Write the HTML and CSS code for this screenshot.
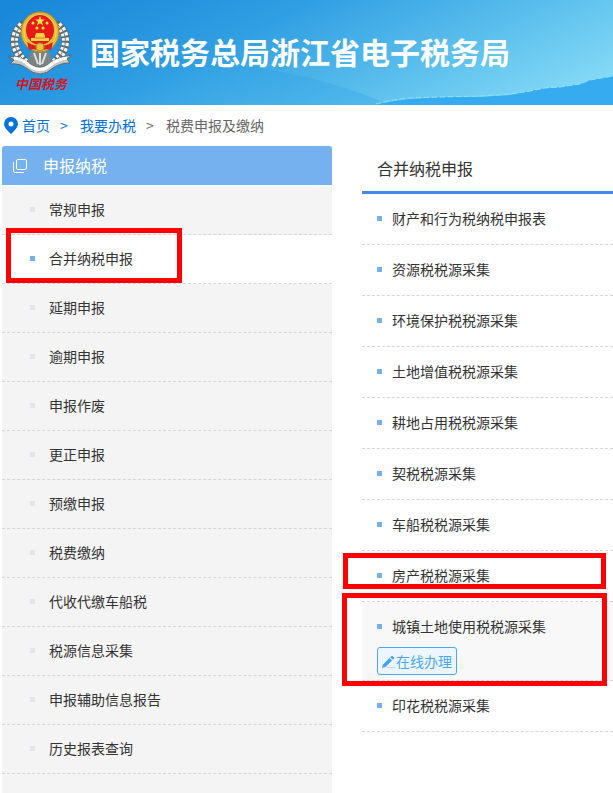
FILE: index.html
```html
<!DOCTYPE html>
<html lang="zh-CN">
<head>
<meta charset="utf-8">
<meta name="viewport" content="width=device-width, initial-scale=1">
<title>国家税务总局浙江省电子税务局</title>
<link rel="stylesheet" href="styles.css">
</head>
<body>
<header class="banner">
  <svg class="banner-art" viewBox="0 0 613 105" preserveAspectRatio="none" aria-hidden="true">
    <defs>
      <linearGradient id="sky" gradientUnits="userSpaceOnUse" x1="90" y1="-60" x2="310" y2="390">
        <stop offset="0" stop-color="#1583d8"/>
        <stop offset=".3" stop-color="#2f9ee2"/>
        <stop offset=".55" stop-color="#62c4ee"/>
        <stop offset=".75" stop-color="#90e0f8"/>
      </linearGradient>
      <linearGradient id="hill" x1="0" y1="0" x2="1" y2="0">
        <stop offset="0" stop-color="#2a9fe5" stop-opacity="0"/>
        <stop offset=".6" stop-color="#2a9fe5" stop-opacity=".3"/>
        <stop offset="1" stop-color="#2a9fe5" stop-opacity=".3"/>
      </linearGradient>
    </defs>
    <rect width="613" height="105" fill="url(#sky)"/>
    <path d="M120 60Q280 56 390 105H120Z" fill="url(#hill)"/>
    <path d="M376 105Q390 101 410 99L440 97 480 97 510 95 530 91 545 88 560 87 580 84 590 80 613 76V105Z" fill="#37abf0"/>
    <path d="M376 104Q390 100 410 98L440 97 480 96 510 94 530 91 545 88 560 87 580 84 590 80 613 76" fill="none" stroke="#8be4f8" stroke-dasharray="6 2"/>
  </svg>
  <svg class="emblem" viewBox="0 0 68 86" role="img" aria-label="中国税务">
    <g fill="none" stroke-linecap="round">
      <path d="M15 15C3 25 5 44 24 56M51 15C63 25 61 44 42 56" stroke="#5b686d" stroke-width="8"/>
      <path d="M15 15C3 25 5 44 24 56M51 15C63 25 61 44 42 56" stroke="#f1f3ef" stroke-width="7" stroke-dasharray="3 2" stroke-linecap="butt"/>
      <path d="M15 15C3 25 5 44 24 56M51 15C63 25 61 44 42 56" stroke="#777d7c" stroke-width="1"/>
    </g>
    <path d="M24 42H42L46 54 33 60 20 54Z" fill="#7d8583"/>
    <path d="M27 43L31 54M39 43L35 54M33 43V55" stroke="#dfe3df" stroke-width="2"/>
    <path d="M1 46Q10 46 17 50Q26 57 33 57Q40 57 48 50Q55 46 65 45L60 49 63 53Q53 53 46 58Q40 64 33 64Q26 64 19 58Q13 53 3 54L7 50Z" fill="#c3c9c6" stroke="#5b686d"/>
    <path d="M7 48Q16 49 23 56Q33 63 42 56Q50 49 60 48" fill="none" stroke="#fff" stroke-width="3"/>
    <ellipse cx="33" cy="22" rx="19" ry="20" fill="#e4b936" stroke="#b98421"/>
    <ellipse cx="33" cy="22" rx="16" ry="17" fill="none" stroke="#f3d66a"/>
    <ellipse cx="33" cy="20" rx="14" ry="15" fill="#e61b16"/>
    <path d="M20 32Q26 36 33 36Q40 36 46 32L44 40Q38 38 33 41Q28 38 22 40Z" fill="#d92318"/>
    <circle cx="33" cy="37" r="4" fill="#edc23f" stroke="#b98421"/>
    <path d="M33 6L34.300 9.500H38L35 11.700 36.200 15.500 33 13.200 29.800 15.500 31 11.700 28 9.500H31.700Z" fill="#ffe34e"/>
    <g fill="#ffe34e"><circle cx="26" cy="13" r="1.500"/><circle cx="40" cy="13" r="1.500"/><circle cx="30" cy="18" r="1.500"/><circle cx="36" cy="18" r="1.500"/></g>
    <path d="M28 26L29 23H37L38 26V28H42V31H24V28H28Z" fill="#f8cf42"/>
    <path d="M28 28H38" stroke="#d98a22"/>
    <text class="emblem-text" x="8" y="79">中国税务</text>
  </svg>
  <h1 class="site-name">国家税务总局浙江省电子税务局</h1>
</header>

<nav class="crumbs" aria-label="当前位置">
  <svg class="pin" viewBox="0 0 14 17" aria-hidden="true"><path fill-rule="evenodd" d="M7 0A7 7 0 0 1 14 7C14 10.500 10.500 13.500 7 17C3.500 13.500 0 10.500 0 7A7 7 0 0 1 7 0ZM7 4.500A2.500 2.500 0 1 0 7 9.500A2.500 2.500 0 1 0 7 4.500Z" fill="#0070dc"/></svg>
  <a href="#">首页</a>
  <span class="sep sep-link">&gt;</span>
  <a href="#">我要办税</a>
  <span class="sep">&gt;</span>
  <span>税费申报及缴纳</span>
</nav>

<div class="columns">
  <aside class="side">
    <h2 class="side-title">
      <svg class="copy" viewBox="0 0 14 14" aria-hidden="true"><rect x="3.500" y=".5" width="10" height="10" rx="1.500"/><path d="M.5 3V12Q.5 13.500 2 13.500H11"/></svg>
      申报纳税
    </h2>
    <ul class="menu">
      <li><a href="#">常规申报</a></li>
      <li class="current"><a href="#">合并纳税申报</a><span class="mark mark-menu"></span></li>
      <li><a href="#">延期申报</a></li>
      <li><a href="#">逾期申报</a></li>
      <li><a href="#">申报作废</a></li>
      <li><a href="#">更正申报</a></li>
      <li><a href="#">预缴申报</a></li>
      <li><a href="#">税费缴纳</a></li>
      <li><a href="#">代收代缴车船税</a></li>
      <li><a href="#">税源信息采集</a></li>
      <li><a href="#">申报辅助信息报告</a></li>
      <li><a href="#">历史报表查询</a></li>
    </ul>
  </aside>
  <main class="content">
    <h2 class="content-title">合并纳税申报</h2>
    <ul class="forms">
      <li><a href="#">财产和行为税纳税申报表</a></li>
      <li><a href="#">资源税税源采集</a></li>
      <li><a href="#">环境保护税税源采集</a></li>
      <li><a href="#">土地增值税税源采集</a></li>
      <li><a href="#">耕地占用税税源采集</a></li>
      <li><a href="#">契税税源采集</a></li>
      <li><a href="#">车船税税源采集</a></li>
      <li><a href="#">房产税税源采集</a><span class="mark mark-house"></span></li>
      <li class="open">
        <a href="#">城镇土地使用税税源采集</a>
        <button class="handle" type="button">
          <svg class="pen" viewBox="0 0 14 14" aria-hidden="true"><path d="M0 14L1 10.500 7.500 4 10 6.500 3.500 13ZM8.300 3.200L9.500 2Q10 1.500 10.500 2L12 3.500Q12.500 4 12 4.500L10.800 5.700Z" fill="#42a5f3"/><path d="M5 13H14V14H5Z" fill="#b9dcf8"/></svg>在线办理
        </button>
        <span class="mark mark-land"></span>
      </li>
      <li><a href="#">印花税税源采集</a></li>
    </ul>
  </main>
</div>
</body>
</html>
```
FILE: styles.css
```css
* {
  box-sizing: border-box;
}

body {
  display: flex;
  flex-direction: column;
  min-height: 100vh;
  margin: 0;
  background: #fff;
  color: #333;
  font-family: "Noto Sans CJK SC", sans-serif;
  font-size: 14px;
  font-weight: 400;
  line-height: 20px;
}

h1,
h2,
ul {
  margin: 0;
  padding: 0;
}

ul {
  list-style: none;
}

a {
  color: inherit;
  text-decoration: none;
}

.banner {
  position: relative;
  display: flex;
  align-items: center;
  gap: 15px;
  height: 105px;
  padding-left: 7px;
  background: #2b96df;
}

.banner-art {
  position: absolute;
  inset: 0;
  width: 100%;
  height: 100%;
}

.emblem {
  position: relative;
  flex: none;
  width: 68px;
  height: 86px;
}

.emblem-text {
  fill: #d3151c;
  font-size: 13px;
  font-weight: 700;
  font-style: italic;
}

.site-name {
  position: relative;
  padding-bottom: 4px;
  color: #fff;
  font-size: 30px;
  font-weight: 700;
  line-height: 40px;
  white-space: nowrap;
}

.crumbs {
  display: flex;
  align-items: center;
  height: 41px;
  padding: 0 0 2px 4px;
  color: #666;
}

.crumbs a,
.sep-link {
  color: #0070dc;
}

.pin {
  width: 14px;
  height: 17px;
  margin: 2px 4px 0 0;
}

.sep {
  width: 30px;
  padding-left: 10px;
}

.columns {
  display: grid;
  flex: 1;
  grid-template-columns: 330px 1fr;
  gap: 30px;
  padding-left: 2px;
}

.side {
  background: #f4f4f4;
}

.side-title {
  display: flex;
  align-items: center;
  gap: 16px;
  height: 40px;
  padding: 0 0 2px 11px;
  border-bottom: 1px solid #fff;
  border-radius: 3px 3px 0 0;
  background: #75b0ef;
  color: #fff;
  font-size: 16px;
  font-weight: 400;
}

.copy {
  width: 14px;
  height: 14px;
  margin-top: 2px;
  fill: none;
  stroke: #fff;
}

.menu li,
.forms li {
  position: relative;
  border-bottom: 1px dashed #d6d6d6;
}

.menu a,
.forms a {
  display: flex;
  align-items: center;
  padding-bottom: 2px;
}

.menu a {
  gap: 14px;
  height: 48px;
  padding-left: 28px;
}

.menu a::before,
.forms a::before {
  width: 5px;
  height: 5px;
  background: #75b0ef;
  content: "";
}

.menu a::before {
  background: #e4e4ea;
}

.menu .current {
  background: #fff;
}

.menu .current a::before {
  background: #75b0ef;
}

.content-title {
  height: 48px;
  padding: 10px 15px;
  border-bottom: 3px solid #4a86e8;
  font-size: 16px;
  font-weight: 400;
  line-height: 24px;
}

.forms a {
  gap: 10px;
  height: 50px;
  padding-left: 15px;
}

.forms .open {
  padding-bottom: 5px;
  background: #f8f8f8;
}

.open .handle {
  display: flex;
  align-items: center;
  height: 28px;
  margin: -5px 0 0 15px;
  padding: 0 4px;
  border: 1px solid #4ba7f3;
  border-radius: 3px;
  background: #edf6fe;
  color: #4ba7f3;
  font: inherit;
}

.pen {
  width: 14px;
  height: 14px;
}

.mark {
  position: absolute;
  z-index: 1;
  border: 5px solid #f00;
  pointer-events: none;
}

.mark-menu {
  top: -7px;
  left: 4px;
  width: 176px;
  height: 55px;
}

.mark-house {
  top: 2px;
  right: 7px;
  left: -19px;
  height: 36px;
}

.mark-land {
  top: -9px;
  right: 6px;
  left: -20px;
  height: 93px;
}
```
